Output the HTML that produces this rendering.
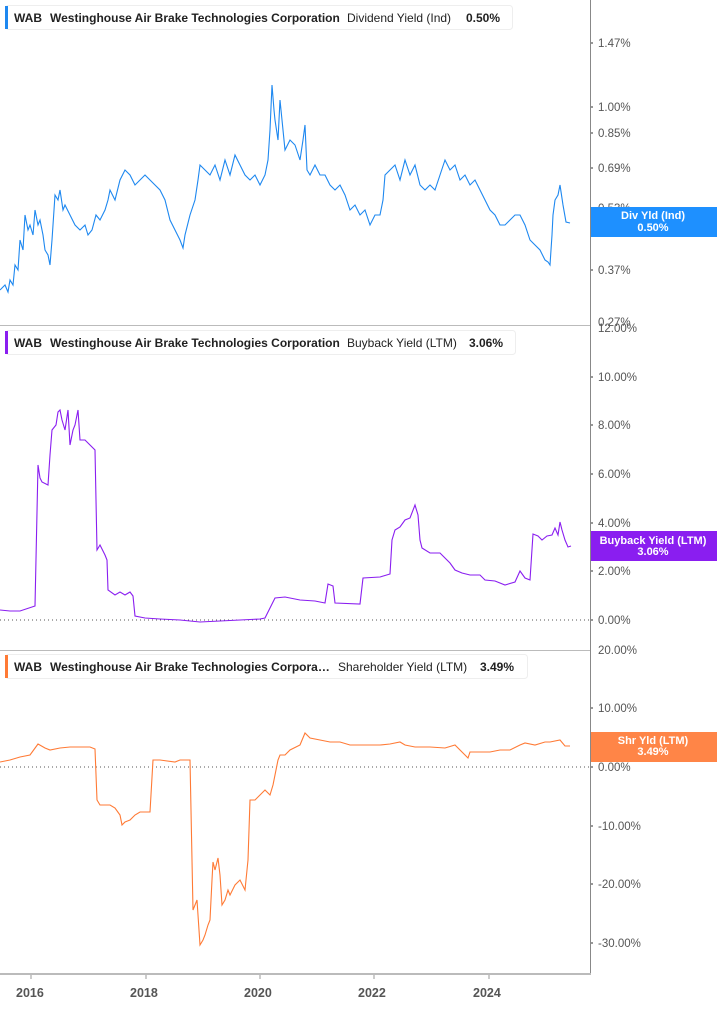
<!DOCTYPE html>
<html><head><meta charset="utf-8"><style>
body{margin:0;background:#fff;width:717px;height:1005px;overflow:hidden;font-family:"Liberation Sans",sans-serif}
svg text{font-family:"Liberation Sans",sans-serif}
.yl{font-size:11.5px;fill:#555}
.xl{font-size:12.5px;fill:#555;font-weight:bold}
.lg{font-size:12px;fill:#222}
.lb{font-size:12px;fill:#222;font-weight:bold}
.bd{font-size:11px;fill:#fff;font-weight:bold}
</style></head><body>
<svg width="717" height="1005" viewBox="0 0 717 1005" xmlns="http://www.w3.org/2000/svg">
<line x1="590.5" y1="0" x2="590.5" y2="975" stroke="#888" stroke-width="1"/>
<line x1="0" y1="325.5" x2="590" y2="325.5" stroke="#bbb"/>
<line x1="0" y1="650.5" x2="590" y2="650.5" stroke="#bbb"/>
<line x1="0" y1="974" x2="591" y2="974" stroke="#bbb" stroke-width="2"/>
<g stroke="#999"><line x1="31" y1="975" x2="31" y2="979"/><line x1="146" y1="975" x2="146" y2="979"/><line x1="260" y1="975" x2="260" y2="979"/><line x1="374" y1="975" x2="374" y2="979"/><line x1="489" y1="975" x2="489" y2="979"/></g>
<line x1="0" y1="620" x2="590" y2="620" stroke="#555" stroke-dasharray="1,3"/>
<line x1="0" y1="767" x2="590" y2="767" stroke="#555" stroke-dasharray="1,3"/>
<g class="yl">
<text x="598" y="47">1.47%</text><text x="598" y="111">1.00%</text><text x="598" y="137">0.85%</text><text x="598" y="172">0.69%</text><text x="598" y="212">0.53%</text><text x="598" y="274">0.37%</text><text x="598" y="326">0.27%</text>
<text x="598" y="332">12.00%</text><text x="598" y="381">10.00%</text><text x="598" y="429">8.00%</text><text x="598" y="478">6.00%</text><text x="598" y="527">4.00%</text><text x="598" y="575">2.00%</text><text x="598" y="624">0.00%</text>
<text x="598" y="654">20.00%</text><text x="598" y="712">10.00%</text><text x="598" y="771">0.00%</text><text x="598" y="830">-10.00%</text><text x="598" y="888">-20.00%</text><text x="598" y="947">-30.00%</text>
</g>
<g fill="#777"><circle cx="592" cy="43" r="1"/><circle cx="592" cy="107" r="1"/><circle cx="592" cy="133" r="1"/><circle cx="592" cy="168" r="1"/><circle cx="592" cy="270" r="1"/><circle cx="592" cy="377" r="1"/><circle cx="592" cy="425" r="1"/><circle cx="592" cy="474" r="1"/><circle cx="592" cy="523" r="1"/><circle cx="592" cy="571" r="1"/><circle cx="592" cy="620" r="1"/><circle cx="592" cy="708" r="1"/><circle cx="592" cy="767" r="1"/><circle cx="592" cy="826" r="1"/><circle cx="592" cy="884" r="1"/><circle cx="592" cy="943" r="1"/></g>
<g class="xl"><text x="16" y="997">2016</text><text x="130" y="997">2018</text><text x="244" y="997">2020</text><text x="358" y="997">2022</text><text x="473" y="997">2024</text></g>
<polyline fill="none" stroke="#1e88f0" stroke-width="1.1" points="0,290 5,285 8,292 10,280 13,285 15,265 18,270 20,240 23,250 25,215 28,230 30,225 33,235 35,210 38,225 40,220 43,235 45,250 48,255 50,265 52,240 55,195 58,200 60,190 63,210 65,205 70,215 75,225 80,230 85,225 88,235 92,230 96,215 100,220 105,210 108,200 110,190 115,200 120,180 125,170 130,175 135,185 140,180 145,175 150,180 155,185 160,190 165,200 168,212 170,220 175,230 180,240 183,248 185,235 190,215 195,200 198,180 200,165 205,170 210,175 215,165 220,180 225,160 230,175 235,155 240,165 245,175 250,180 255,175 260,185 265,175 268,160 270,130 272,85 274,110 275,120 278,140 280,100 282,120 285,150 290,140 295,145 300,160 303,140 305,125 307,170 310,175 315,165 320,175 325,175 330,185 335,190 340,185 345,195 350,210 355,205 360,215 365,210 370,225 375,215 380,215 383,200 385,175 390,170 395,165 400,180 405,160 410,175 415,165 420,185 425,190 430,185 435,190 440,175 445,160 450,170 455,165 460,180 465,175 470,185 475,180 480,190 485,200 490,210 495,215 500,225 505,225 510,220 515,215 520,215 525,225 530,240 535,245 540,250 545,260 548,262 550,265 552,235 553,215 555,200 558,195 560,185 563,205 566,222 570,223"/>
<polyline fill="none" stroke="#8a1ef0" stroke-width="1.1" points="0,610 10,611 20,611 35,606 38,465 40,478 42,482 48,485 50,455 52,430 56,425 58,412 60,410 62,420 65,430 68,410 70,445 73,430 75,425 78,410 80,440 85,440 90,445 95,450 97,550 100,545 105,555 107,560 108,590 115,595 120,592 125,595 130,592 133,596 135,616 145,618 160,619 180,620 200,622 220,621 240,620 260,619 265,618 275,598 285,597 300,600 315,601 325,603 328,584 333,586 335,603 360,604 363,578 380,577 390,574 392,540 395,530 400,527 405,520 410,518 415,505 418,515 420,540 422,548 430,553 440,553 450,563 455,570 462,573 470,575 480,575 485,580 495,581 505,585 515,582 520,571 525,578 530,580 533,534 538,536 542,540 547,536 552,535 555,528 558,535 560,522 562,530 565,540 568,547 571,546"/>
<polyline fill="none" stroke="#ff7a35" stroke-width="1.1" points="0,762 10,760 20,757 30,755 38,744 45,748 50,750 60,748 70,747 80,747 90,747 95,749 97,800 100,805 110,805 115,808 120,815 122,825 125,822 130,820 135,815 140,812 150,812 153,760 160,760 175,762 180,760 190,760 193,910 195,905 197,900 200,945 203,940 205,935 208,925 210,920 212,880 213,862 215,870 218,858 220,875 222,905 225,900 228,890 230,895 235,885 240,880 245,890 248,860 250,800 255,800 260,795 265,790 270,795 273,785 275,775 278,760 280,755 285,755 290,750 300,745 305,733 310,738 320,740 330,742 340,742 350,745 360,745 370,745 380,745 390,744 400,742 405,745 415,747 430,747 445,748 455,745 465,755 468,758 470,752 480,752 490,752 500,750 510,750 520,745 525,743 535,745 545,742 550,742 560,740 565,746 570,746"/>
<g>
<rect x="5.5" y="5.5" width="507" height="24" rx="3" fill="#fff" stroke="#eee"/><rect x="5" y="6" width="3" height="23" fill="#1e88f0"/>
<text x="14" y="22" class="lb">WAB</text><text x="50" y="22" class="lb">Westinghouse Air Brake Technologies Corporation</text><text x="347" y="22" class="lg">Dividend Yield (Ind)</text><text x="466" y="22" class="lb">0.50%</text>
</g>
<g>
<rect x="5.5" y="330.5" width="510" height="24" rx="3" fill="#fff" stroke="#eee"/><rect x="5" y="331" width="3" height="23" fill="#8a1ef0"/>
<text x="14" y="347" class="lb">WAB</text><text x="50" y="347" class="lb">Westinghouse Air Brake Technologies Corporation</text><text x="347" y="347" class="lg">Buyback Yield (LTM)</text><text x="469" y="347" class="lb">3.06%</text>
</g>
<g>
<rect x="5.5" y="654.5" width="522" height="24" rx="3" fill="#fff" stroke="#eee"/><rect x="5" y="655" width="3" height="23" fill="#ff7a35"/>
<text x="14" y="671" class="lb">WAB</text><text x="50" y="671" class="lb">Westinghouse Air Brake Technologies Corpora…</text><text x="338" y="671" class="lg">Shareholder Yield (LTM)</text><text x="480" y="671" class="lb">3.49%</text>
</g>
<rect x="591" y="207" width="126" height="30" fill="#1e90ff"/>
<text x="653" y="219" class="bd" text-anchor="middle">Div Yld (Ind)</text><text x="653" y="231" class="bd" text-anchor="middle">0.50%</text>
<rect x="591" y="531" width="126" height="30" fill="#8a1ef0"/>
<text x="653" y="544" class="bd" text-anchor="middle">Buyback Yield (LTM)</text><text x="653" y="555" class="bd" text-anchor="middle">3.06%</text>
<rect x="591" y="732" width="126" height="30" fill="#ff8547"/>
<text x="653" y="744" class="bd" text-anchor="middle">Shr Yld (LTM)</text><text x="653" y="755" class="bd" text-anchor="middle">3.49%</text>
</svg>
</body></html>
